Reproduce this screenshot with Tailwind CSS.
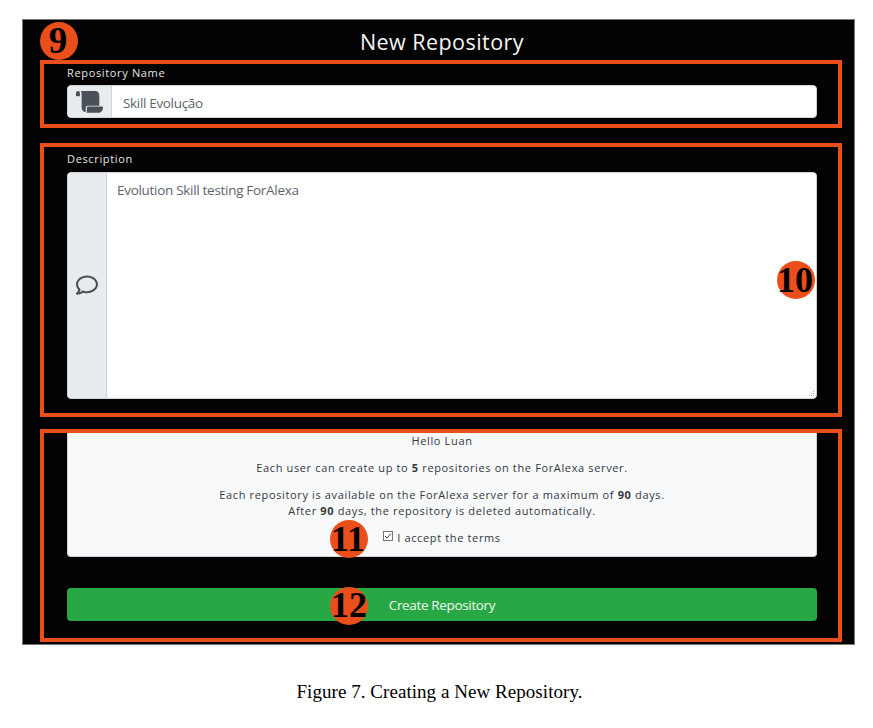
<!DOCTYPE html>
<html lang="en">
<head>
<meta charset="utf-8">
<title>New Repository</title>
<script src="https://cdn.jsdelivr.net/npm/@tailwindcss/browser@4"></script>
</head>
<body class="bg-white w-[873px] h-[728px] overflow-hidden font-['Open_Sans',sans-serif]">
<main class="relative ml-[22px] mt-[19px] w-[833px] h-[626px] bg-[#030303] border border-[#777] px-[17px] flex flex-col">
  <h1 class="h-10 shrink-0 pl-[7px] pt-[4px] text-center text-[21.5px] leading-[36px] tracking-[0.45px] text-[#f4f4f4]"><span>New Repository</span></h1>

  <section class="h-[68px] w-[802px] shrink-0 border-4 border-[#e94e1b] px-[23px]">
    <label class="block h-[21px] text-[11px] leading-[18px] tracking-[0.65px] text-[#e4e4e4]"><span>Repository Name</span></label>
    <div class="flex h-[33px] w-[750px] overflow-hidden rounded-[4px] border border-[#ced4da] bg-white">
      <div class="flex w-11 items-center justify-center border-r border-[#ced4da] bg-[#e9ecef]">
        <svg class="h-[22px] w-[27px]" viewBox="0 0 27 22" fill="#495057"><path d="M2 0C.8 0 0 1 0 2.500V4.500Q0 5.200.8 5.200H3.900V2C3.900 .8 3.200 0 2 0zM4.700 0H19C22 0 23.300 2 23.300 4.500V14.700H11.500C10.200 14.700 9.700 15.700 9.700 17V21C7.300 21 5.600 19.200 5.600 16.500V3C5.600 1.800 5.300.8 4.700 0zM12 15.600H26.200Q27 15.600 27 16.400C27 19.400 25 21.800 22.500 21.800H10.500C10.700 21 10.900 20 10.900 18.800V16.600Q10.900 15.600 12 15.600z"/></svg>
      </div>
      <div class="pl-[11px] text-[13.5px] leading-[34px] tracking-[-0.33px] text-[#5d646b]"><span>Skill Evolução</span></div>
    </div>
  </section>

  <section class="mt-[15px] h-[274px] w-[802px] shrink-0 border-4 border-[#e94e1b] px-[23px]">
    <label class="block h-[25px] pt-[3px] text-[11px] leading-[18px] tracking-[0.65px] text-[#e4e4e4]"><span>Description</span></label>
    <div class="relative flex h-[227px] w-[750px] overflow-hidden rounded-[4px] border border-[#ced4da] bg-white">
      <div class="flex w-[39px] items-center justify-center border-r border-[#ced4da] bg-[#e9ecef]">
        <svg class="-mt-px h-[22px] w-[22px]" viewBox="0 0 512 512" fill="#495057"><path d="M256 32C114.600 32 0 125.100 0 240c0 47.600 19.900 91.200 52.900 126.300C38 405.700 7 439.100 6.500 439.500c-6.600 7-8.400 17.200-4.600 26S14.400 480 24 480c61.500 0 110-25.700 139.100-46.300C192 442.800 223.200 448 256 448c141.400 0 256-93.100 256-208S397.400 32 256 32zm0 368c-26.700 0-53.100-4.100-78.400-12.100l-22.700-7.200-19.500 13.800c-14.300 10.100-33.900 21.400-57.500 29 7.300-12.100 14.400-25.700 19.900-40.200l10.600-28.100-20.600-21.800C69.700 314.100 48 282.200 48 240c0-88.200 93.300-160 208-160s208 71.800 208 160-93.300 160-208 160z"/></svg>
      </div>
      <div class="pl-[10px] pt-[8px] text-[13.5px] leading-[18px] tracking-[-0.3px] text-[#5d646b]"><span>Evolution Skill testing ForAlexa</span></div>
      <svg class="absolute bottom-0 right-[1px] h-[8px] w-[8px]" viewBox="0 0 8 8" fill="#a9a9a9"><path d="M6 1h1v1H6zM4 3h1v1H4zM6 3h1v1H6zM2 5h1v1H2zM4 5h1v1H4zM6 5h1v1H6z"/></svg>
    </div>
  </section>

  <section class="mt-[12px] h-[213px] w-[802px] shrink-0 border-4 border-[#e94e1b] px-[23px]">
    <div class="h-[124px] w-[750px] rounded-b-[4px] border border-t-0 border-[#cfd2d5] bg-[#f8f9fb] text-center text-[11px] leading-[16px] tracking-[0.64px] text-[#34383c]">
      <p class="h-[27px]"><span>Hello Luan</span></p>
      <p class="h-[27px]"><span>Each user can create up to <b>5</b> repositories on the ForAlexa server.</span></p>
      <p><span>Each repository is available on the ForAlexa server for a maximum of <b>90</b> days.</span></p>
      <p class="h-[27px]"><span>After <b>90</b> days, the repository is deleted automatically.</span></p>
      <p class="flex justify-center gap-[4px]"><svg class="mt-[1px] h-[10px] w-[10px]" viewBox="0 0 10 10" fill="none"><rect x=".5" y=".5" width="9" height="9" fill="#fff" stroke="#777"/><path d="M2 5l2 2 4-4.500" stroke="#444"/></svg><span>I accept the terms</span></p>
    </div>
    <button class="mt-[31px] block h-[33px] w-[750px] rounded-[4px] bg-[#28a745] text-center text-[13.5px] leading-[35px] tracking-[-0.35px] text-[#eefaf0]"><span>Create Repository</span></button>
  </section>

  <div class="absolute left-[17px] top-[2px] flex h-[38px] w-[38px] items-center justify-center rounded-full bg-[#e94e1b] font-['Liberation_Serif',serif] text-[37px] font-bold leading-[38px] text-black"><span class="-ml-[2px]">9</span></div>
  <div class="absolute left-[754px] top-[241px] flex h-[38px] w-[38px] items-center justify-center rounded-full bg-[#e94e1b] font-['Liberation_Serif',serif] text-[36px] font-bold leading-[38px] text-black"><span class="-ml-[2px]">10</span></div>
  <div class="absolute left-[307px] top-[500px] flex h-[38px] w-[38px] items-center justify-center rounded-full bg-[#e94e1b] font-['Liberation_Serif',serif] text-[36px] font-bold leading-[38px] text-black"><span class="-ml-[2px] -mt-px">11</span></div>
  <div class="absolute left-[307px] top-[567px] flex h-[38px] w-[38px] items-center justify-center rounded-full bg-[#e94e1b] font-['Liberation_Serif',serif] text-[36px] font-bold leading-[36px] text-black"><span class="-mt-[2px]">12</span></div>
</main>
<p class="mt-[36px] pl-[6px] text-center font-['Liberation_Serif',serif] text-[19px] leading-[22px] tracking-[0.05px] text-black"><span>Figure 7. Creating a New Repository.</span></p>
</body>
</html>
